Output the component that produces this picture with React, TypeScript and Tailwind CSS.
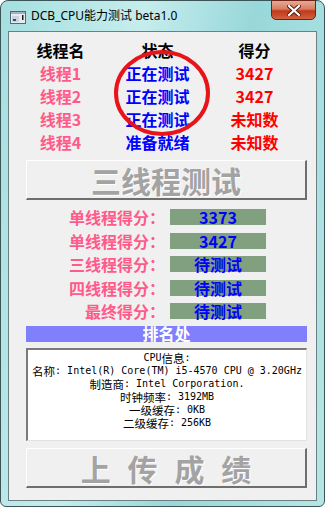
import React from "react";

const threads = [
    { name: "线程1", status: "正在测试", score: "3427" },
    { name: "线程2", status: "正在测试", score: "3427" },
    { name: "线程3", status: "正在测试", score: "未知数" },
    { name: "线程4", status: "准备就绪", score: "未知数" },
];

const scores = [
    { label: "单线程得分：", value: "3373" },
    { label: "单线程得分：", value: "3427" },
    { label: "三线程得分：", value: "待测试" },
    { label: "四线程得分：", value: "待测试" },
    { label: "最终得分：", value: "待测试" },
];

const cpuInfo = [
    "CPU信息:",
    "名称: Intel(R) Core(TM) i5-4570 CPU @ 3.20GHz",
    "制造商: Intel Corporation.",
    "时钟频率: 3192MB",
    "一级缓存: 0KB",
    "二级缓存: 256KB",
];

// split a line into cjk / latin runs so the cjk glyphs get full width
const MixedLine = ({ text }: { text: string }) => {
    const parts = text.match(/[\u3000-\u9fff\uff00-\uffef]+|[^\u3000-\u9fff\uff00-\uffef]+/g) || [];
    return (
        <div className="h-[13px] flex justify-center items-center whitespace-pre">
            {parts.map((p, i) =>
                /[\u3000-\u9fff]/.test(p) ? (
                    <span key={i} className="text-[11.5px] leading-[12px] font-['Noto_Sans_CJK_SC',sans-serif]">
                        {p}
                    </span>
                ) : (
                    <span key={i} className="text-[10px] leading-[12px]">
                        {p}
                    </span>
                )
            )}
        </div>
    );
};

const TitleBar = () => (
    <div className="h-[30px] flex items-start">
        <svg width="16" height="13" viewBox="0 0 16 13" className="ml-[2px] mt-[10px]">
            <rect x="0.5" y="0.5" width="15" height="12" fill="#e8ecef" stroke="#5b6770" />
            <rect x="1" y="1" width="14" height="2" fill="#9fb3c4" />
            <rect x="2" y="5" width="7" height="6" fill="#c9d4dc" />
            <rect x="3" y="8" width="3" height="2" fill="#2a4f86" />
            <rect x="12" y="4" width="1.5" height="5" fill="#1d1d1d" />
        </svg>
        <span className="ml-[5px] mt-[7px] text-[12px] leading-[16px] text-black font-['Noto_Sans','Noto_Sans_CJK_SC',sans-serif]">
            DCB_CPU能力测试 beta1.0
        </span>
        <div className="ml-auto mr-[1px] -mt-[1px] w-[45px] h-[20px] rounded-b-[5px] border border-[#6b2418] bg-[linear-gradient(180deg,#e9a995_0%,#d77c62_45%,#c0391c_55%,#d2603f_100%)] flex items-center justify-center">
            <svg width="14" height="11" viewBox="0 0 14 11">
                <path d="M2 1 L12 10 M12 1 L2 10" stroke="#4a1a10" strokeWidth="4" strokeLinecap="square" />
                <path d="M2 1 L12 10 M12 1 L2 10" stroke="#ffffff" strokeWidth="2.2" strokeLinecap="square" />
            </svg>
        </div>
    </div>
);

const App = () => {
    return (
        <div className="w-[325px] h-[507px] bg-white font-['Noto_Sans_CJK_SC',sans-serif]">
            <div className="h-full flex flex-col rounded-t-[8px] rounded-b-[6px] border border-[#3d5457] bg-[linear-gradient(100deg,#a5dfe0_0%,#c6eded_35%,#98d8da_62%,#b5e6e6_100%)] px-[7px] pb-[5px]">
                <TitleBar />

                <div className="relative flex-1 flex flex-col border border-[#6d7f80] bg-[#f0f0f0]">
                    {/* thread table */}
                    <div className="mt-[7px] pl-[3px] grid grid-cols-[97px_97px_97px] text-[16px] leading-[23px] text-center">
                        <div className="font-bold text-black">线程名</div>
                        <div className="font-bold text-black">状态</div>
                        <div className="font-bold text-black">得分</div>
                        {threads.map((t) => (
                            <React.Fragment key={t.name}>
                                <div className="font-semibold text-[#ff5a8a]">{t.name}</div>
                                <div className="font-semibold text-[#0000ff]">{t.status}</div>
                                <div className="font-semibold text-[#ff0000]">{t.score}</div>
                            </React.Fragment>
                        ))}
                    </div>

                    <svg width="98" height="88" viewBox="0 0 98 88" className="absolute left-[104px] top-[17px]">
                        <ellipse cx="49" cy="44" rx="46" ry="41" fill="none" stroke="#e8141a" strokeWidth="4" />
                    </svg>

                    <button className="mt-[6px] ml-[17px] w-[281px] h-[40px] border-t border-l border-white border-b-2 border-r-2 border-b-[#6e6e6e] border-r-[#6e6e6e] bg-[#f0f0f0] text-[30px] leading-[36px] font-bold text-[#a3a3a3] [text-shadow:1px_1px_0_#ffffff]">
                        三线程测试
                    </button>

                    {/* scores */}
                    <div className="mt-[9px] flex flex-col gap-[7.5px]">
                        {scores.map((s, i) => (
                            <div key={i} className="flex items-center h-[16px]">
                                <div className="w-[156px] text-right text-[16px] leading-[16px] font-semibold text-[#ff5a8a] whitespace-nowrap">
                                    {s.label}
                                </div>
                                <div className="ml-[5px] w-[96px] h-[16px] bg-[#80a080] text-center text-[16px] leading-[16px] font-bold text-[#0000ff]">
                                    {s.value}
                                </div>
                            </div>
                        ))}
                    </div>

                    <div className="mt-[7px] ml-[17px] w-[281px] h-[16px] bg-[#8080ff] text-center text-[16px] leading-[14px] font-bold text-white">
                        排名处
                    </div>

                    <div className="mt-[6px] ml-[17px] w-[281px] h-[93px] border-t-2 border-l-2 border-t-[#7a7a7a] border-l-[#7a7a7a] border-b border-r border-b-[#e3e3e3] border-r-[#e3e3e3] bg-white pt-[1px] text-black font-['DejaVu_Sans_Mono','Noto_Sans_CJK_SC',monospace]">
                        {cpuInfo.map((l, i) => (
                            <MixedLine key={i} text={l} />
                        ))}
                    </div>

                    <button className="mt-[7px] ml-[17px] w-[281px] h-[40px] border-t border-l border-white border-b-2 border-r-2 border-b-[#6e6e6e] border-r-[#6e6e6e] bg-[#f0f0f0] text-[30px] leading-[36px] font-bold text-[#a3a3a3] [text-shadow:1px_1px_0_#ffffff] [word-spacing:10px]">
                        上 传 成 绩
                    </button>
                </div>
            </div>
        </div>
    );
};

export default App;
